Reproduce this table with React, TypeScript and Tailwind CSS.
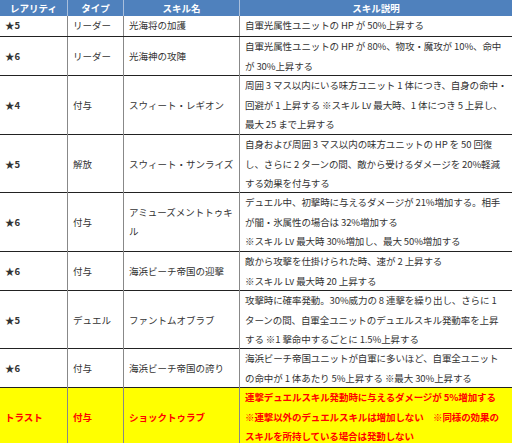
import React from "react";

type Row = {
  h: string;
  rarity: string;
  type: string;
  name: React.ReactNode;
  desc: string[];
  hl?: boolean;
};

const rows: Row[] = [
  { h: "h-[21px]", rarity: "★5", type: "リーダー", name: "光海将の加護", desc: ["自軍光属性ユニットの HP が 50%上昇する"] },
  { h: "h-[39px]", rarity: "★6", type: "リーダー", name: "光海神の攻陣", desc: ["自軍光属性ユニットの HP が 80%、物攻・魔攻が 10%、命中", "が 30%上昇する"] },
  { h: "h-[59px]", rarity: "★4", type: "付与", name: "スウィート・レギオン", desc: ["周囲 3 マス以内にいる味方ユニット 1 体につき、自身の命中・", "回避が 1 上昇する ※スキル Lv 最大時、1 体につき 5 上昇し、", "最大 25 まで上昇する"] },
  { h: "h-[58px]", rarity: "★5", type: "解放", name: "スウィート・サンライズ", desc: ["自身および周囲 3 マス以内の味方ユニットの HP を 50 回復", "し、さらに 2 ターンの間、敵から受けるダメージを 20%軽減", "する効果を付与する"] },
  { h: "h-[59px]", rarity: "★6", type: "付与", name: (<>アミューズメントトゥキ<br />ル</>), desc: ["デュエル中、初撃時に与えるダメージが 21%増加する。相手", "が闇・氷属性の場合は 32%増加する", "※スキル Lv 最大時 30%増加し、最大 50%増加する"] },
  { h: "h-[39px]", rarity: "★6", type: "付与", name: "海浜ビーチ帝国の迎撃", desc: ["敵から攻撃を仕掛けられた時、速が 2 上昇する", "※スキル Lv 最大時 20 上昇する"] },
  { h: "h-[58px]", rarity: "★5", type: "デュエル", name: "ファントムオブラブ", desc: ["攻撃時に確率発動。30%威力の 8 連撃を繰り出し、さらに 1", "ターンの間、自軍全ユニットのデュエルスキル発動率を上昇", "する ※1 撃命中するごとに 1.5%上昇する"] },
  { h: "h-[39px]", rarity: "★6", type: "付与", name: "海浜ビーチ帝国の誇り", desc: ["海浜ビーチ帝国ユニットが自軍に多いほど、自軍全ユニット", "の命中が 1 体あたり 5%上昇する ※最大 30%上昇する"] },
  { h: "h-[58px]", rarity: "トラスト", type: "付与", name: "ショックトゥラブ", desc: ["連撃デュエルスキル発動時に与えるダメージが 5%増加する", "※連撃以外のデュエルスキルは増加しない　※同様の効果の", "スキルを所持している場合は発動しない"], hl: true },
];

export default function App() {
  return (
    <div
      className="w-[512px] h-[443px] overflow-hidden bg-white text-[9.5px] leading-[19.5px] text-[#333]"
      style={{ fontFamily: '"Noto Sans CJK JP", "Noto Sans", sans-serif' }}
    >
      <div className="grid grid-cols-[68px_56px_116px_272px] h-[16px] bg-[#4f81bd] text-white font-bold leading-[16px]">
        <div className="text-center border-r border-[#a9bfdc]">レアリティ</div>
        <div className="text-center border-r border-[#a9bfdc]">タイプ</div>
        <div className="text-center border-r border-[#a9bfdc]">スキル名</div>
        <div className="text-center">スキル説明</div>
      </div>
      {rows.map((r, i) => (
        <div
          key={i}
          className={`grid grid-cols-[68px_56px_116px_272px] ${r.h} ${i < rows.length - 1 ? "border-b border-[#222]" : ""} ${r.hl ? "bg-[#ffff00] text-[#ff0000] font-bold" : ""}`}
        >
          <div className="flex items-center pl-[5px] border-r border-[#888] font-bold whitespace-nowrap">{r.rarity}</div>
          <div className="flex items-center pl-[5px] border-r border-[#888] whitespace-nowrap">{r.type}</div>
          <div className="flex items-center pl-[5px] border-r border-[#888] whitespace-nowrap">
            <div>{r.name}</div>
          </div>
          <div className="flex flex-col justify-center pl-[5px] whitespace-nowrap tracking-[-0.1px]">
            {r.desc.map((d, j) => (
              <div key={j}>{d}</div>
            ))}
          </div>
        </div>
      ))}
    </div>
  );
}
